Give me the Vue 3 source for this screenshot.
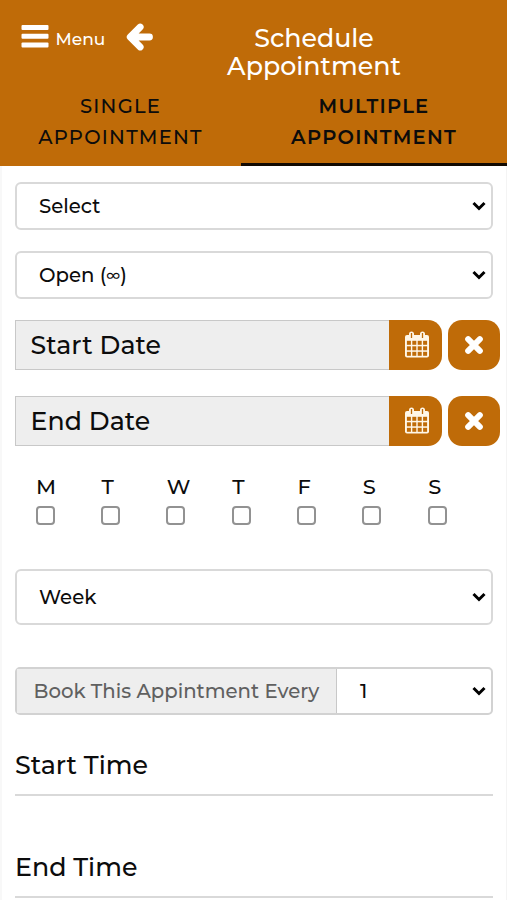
<script setup>
import { ref } from 'vue'

const dates = ['Start Date', 'End Date']
const days = ref(['M', 'T', 'W', 'T', 'F', 'S', 'S'].map((label) => ({ label, checked: false })))
const rows = [0, 1, 2]
const cols = [0, 1, 2, 3]
</script>

<template>
  <main class="page">
    <header class="header">
      <div class="topbar">
        <button class="menu">
          <svg class="bars" viewBox="0 0 28 24">
            <rect x="0.5" y="1" width="27" height="5" rx="1" />
            <rect x="0.5" y="9.7" width="27" height="5" rx="1" />
            <rect x="0.5" y="18.4" width="27" height="5" rx="1" />
          </svg>
          <span class="menu-label">Menu</span>
        </button>
        <button class="back">
          <svg class="arrow" viewBox="0 0 28 28">
            <path d="M14.200 4 4.200 14l10 10M5 14h18.500" />
          </svg>
        </button>
        <h1 class="title"><span>Schedule</span><span>Appointment</span></h1>
      </div>
      <nav class="tabs">
        <a class="tab"><span>SINGLE</span><span>APPOINTMENT</span></a>
        <a class="tab active"><span>MULTIPLE</span><span>APPOINTMENT</span></a>
      </nav>
    </header>

    <section class="form">
      <div class="select">
        <span>Select</span>
        <svg class="chev" viewBox="0 0 14 10"><path d="M1.500 2 7 7.500 12.500 2" /></svg>
      </div>
      <div class="select open">
        <span>Open (<span class="inf">∞</span>)</span>
        <svg class="chev" viewBox="0 0 14 10"><path d="M1.500 2 7 7.500 12.500 2" /></svg>
      </div>

      <div v-for="d in dates" :key="d" class="date">
        <div class="date-input"><span>{{ d }}</span></div>
        <button class="cal">
          <svg class="cal-icon" viewBox="0 0 26 27">
            <rect class="fill" x="1" y="4" width="24" height="22.500" rx="2" />
            <rect class="fill" x="5" y="0.500" width="5" height="8" rx="2.500" />
            <rect class="fill" x="16" y="0.500" width="5" height="8" rx="2.500" />
            <rect class="hole" x="6.850" y="2" width="1.300" height="5" />
            <rect class="hole" x="17.850" y="2" width="1.300" height="5" />
            <template v-for="r in rows" :key="r">
              <rect v-for="c in cols" :key="c" class="hole" :x="2.900 + c * 5.400" :y="9.800 + r * 5.500" width="4" height="4" />
            </template>
          </svg>
        </button>
        <button class="clear">
          <svg class="x-icon" viewBox="0 0 20 20"><path d="M3.500 3.500 16.500 16.500M16.500 3.500 3.500 16.500" /></svg>
        </button>
      </div>

      <div class="days">
        <label v-for="(d, i) in days" :key="i" class="day">
          <span class="day-label">{{ d.label }}</span>
          <input v-model="d.checked" type="checkbox" class="box" />
        </label>
      </div>

      <div class="select week">
        <span>Week</span>
        <svg class="chev" viewBox="0 0 14 10"><path d="M1.500 2 7 7.500 12.500 2" /></svg>
      </div>

      <div class="group">
        <div class="addon"><span>Book This Appintment Every</span></div>
        <div class="count">
          <span>1</span>
          <svg class="chev" viewBox="0 0 14 10"><path d="M1.500 2 7 7.500 12.500 2" /></svg>
        </div>
      </div>

      <div class="time start"><span>Start Time</span></div>
      <div class="time end"><span>End Time</span></div>
    </section>
  </main>
</template>

<style>
body {
  margin: 0;
  background: #fff;
}
</style>

<style scoped>
* {
  box-sizing: border-box;
}
.page {
  width: 507px;
  height: 900px;
  overflow: hidden;
  background: #fff;
  color: #0c0c0c;
  font-family: Montserrat, Inter, sans-serif;
  font-size: 19.700px;
  font-weight: 500;
  white-space: nowrap;
}
button {
  border: 0;
  padding: 0;
  margin: 0;
  background: none;
  font: inherit;
  color: inherit;
}
.header {
  height: 166px;
  background: #bf6b08;
}
.topbar {
  display: flex;
  height: 91px;
  color: #fff;
}
.menu {
  display: flex;
  align-items: center;
  width: 105px;
  height: 24px;
  margin: 24px 0 0 21px;
}
.bars {
  width: 28px;
  height: 24px;
  fill: #fff;
}
.menu-label {
  padding: 6px 0 0 6.500px;
  font-size: 17px;
  line-height: 24px;
}
.back {
  width: 28px;
  height: 28px;
  margin-top: 23px;
}
.arrow {
  display: block;
  width: 28px;
  height: 28px;
  fill: none;
  stroke: #fff;
  stroke-width: 6.800;
  stroke-linecap: round;
  stroke-linejoin: round;
}
.title {
  display: flex;
  flex-direction: column;
  align-items: center;
  width: 320px;
  margin: 24px 0 0;
  font-size: 25.300px;
  line-height: 28px;
  font-weight: 500;
}
.tabs {
  display: flex;
  height: 75px;
}
.tab {
  display: flex;
  flex-direction: column;
  align-items: center;
  width: 241px;
  font-size: 19.500px;
  line-height: 31px;
  letter-spacing: 1.250px;
}
.tab.active {
  width: 266px;
  border-bottom: 3px solid #120a02;
  font-weight: 600;
}
.form {
  height: 734px;
  padding: 16px 6px 0 13px;
  border-left: 2px solid #f8f8f8;
  border-right: 1px solid #f4f4f4;
}
.select {
  display: flex;
  align-items: center;
  justify-content: space-between;
  width: 478px;
  height: 48px;
  padding: 0 5px 0 22px;
  border: 2px solid #d9d9d9;
  border-radius: 6px;
}
.open {
  margin: 21px 0;
}
.chev {
  width: 14px;
  height: 10px;
  fill: none;
  stroke: #000;
  stroke-width: 3;
}
.inf {
  font-size: 15px;
  line-height: 1;
  vertical-align: 1px;
}
.date {
  display: flex;
  height: 50px;
  margin-bottom: 26px;
}
.date-input {
  display: flex;
  align-items: center;
  width: 374px;
  padding: 0 0 1px 14.500px;
  border: 1px solid #c8c8c8;
  border-right: 0;
  background: #eee;
  font-size: 25.200px;
  letter-spacing: 0.080px;
}
.cal,
.clear {
  display: flex;
  align-items: center;
  justify-content: center;
  background: #bf6b08;
}
.cal {
  width: 53px;
  border-radius: 0 14px 14px 0;
}
.cal-icon {
  width: 26px;
  height: 27px;
  margin: 0 0 2px 2px;
}
.fill {
  fill: #fff7e8;
}
.hole {
  fill: #bf6b08;
}
.clear {
  width: 52px;
  margin-left: 6px;
  border-radius: 14px;
}
.x-icon {
  width: 18px;
  height: 18px;
  fill: none;
  stroke: #fff;
  stroke-width: 6.600;
  stroke-linecap: round;
}
.days {
  display: flex;
  height: 97px;
  padding-left: 20.600px;
}
.day {
  display: flex;
  flex-direction: column;
  width: 65.350px;
}
.day-label {
  height: 34px;
  padding: 2px 0 0 0.500px;
  font-size: 21px;
  line-height: 26px;
}
.box {
  appearance: none;
  width: 19px;
  height: 19px;
  margin: 0;
  border: 2px solid #929292;
  border-radius: 4px;
}
.week {
  height: 56px;
}
.group {
  display: flex;
  width: 478px;
  height: 48px;
  margin-top: 42px;
  border: 2px solid #d2d2d2;
  border-radius: 5px;
}
.addon {
  display: flex;
  align-items: center;
  width: 320px;
  padding-left: 16.500px;
  border-right: 1px solid #c8c8c8;
  background: #eee;
  color: #606060;
}
.count {
  display: flex;
  flex: 1;
  align-items: center;
  justify-content: space-between;
  padding: 0 5px 0 23px;
}
.time {
  display: flex;
  width: 478px;
  border-bottom: 2px solid #d9d9d9;
  font-size: 25.300px;
  line-height: 30px;
}
.start {
  height: 81px;
  padding-top: 35px;
}
.end {
  height: 102px;
  padding-top: 56px;
}
</style>
